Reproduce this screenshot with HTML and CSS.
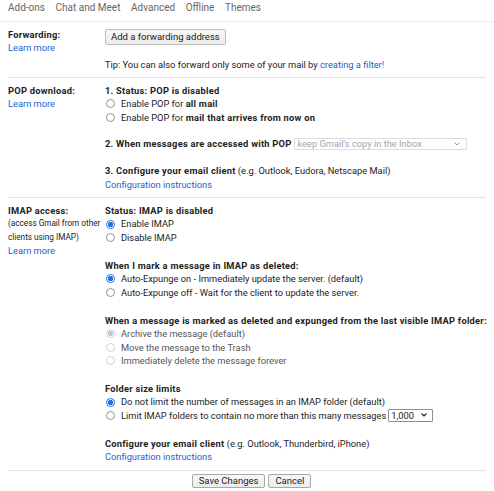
FILE: index.html
```html
<!DOCTYPE html>
<html>
<head>
<meta charset="utf-8">
<link rel="stylesheet" href="styles.css">
</head>
<body>
<div class="tabs">
  <span class="tab">Add-ons</span>
  <span class="tab">Chat and Meet</span>
  <span class="tab">Advanced</span>
  <span class="tab">Offline</span>
  <span class="tab">Themes</span>
</div>

<div class="section">
  <div class="label">
    <div class="line b">Forwarding:</div>
    <div class="line"><a class="link">Learn more</a></div>
  </div>
  <div class="content">
    <div><span class="btn fwd">Add a forwarding address</span></div>
    <div class="line tip">Tip: You can also forward only some of your mail by <a class="link">creating a filter!</a></div>
  </div>
</div>

<div class="section">
  <div class="label">
    <div class="line b">POP download:</div>
    <div class="line"><a class="link">Learn more</a></div>
  </div>
  <div class="content">
    <div class="line b">1. Status: POP is disabled</div>
    <div class="line opt"><span class="radio"></span>Enable POP for&nbsp;<b>all mail</b></div>
    <div class="line opt"><span class="radio"></span>Enable POP for&nbsp;<b>mail that arrives from now on</b></div>
    <div class="line"></div>
    <div class="line opt"><b>2. When messages are accessed with POP</b><span class="select dis">keep Gmail's copy in the Inbox<svg class="chev" width="6" height="4" viewBox="0 0 6 4"><path d="M0.5 0.5 L3 3 L5.5 0.5" fill="none" stroke="#9e9e9e" stroke-width="1"/></svg></span></div>
    <div class="line"></div>
    <div class="line"><b>3. Configure your email client</b> (e.g. Outlook, Eudora, Netscape Mail)</div>
    <div class="line"><a class="link">Configuration instructions</a></div>
  </div>
</div>

<div class="section">
  <div class="label">
    <div class="line b">IMAP access:</div>
    <div class="line small">(access Gmail from other</div>
    <div class="line small">clients using IMAP)</div>
    <div class="line"><a class="link">Learn more</a></div>
  </div>
  <div class="content">
    <div class="group">
      <div class="line b">Status: IMAP is disabled</div>
      <div class="line opt"><span class="radio on"></span>Enable IMAP</div>
      <div class="line opt"><span class="radio"></span>Disable IMAP</div>
    </div>
    <div class="group">
      <div class="line b">When I mark a message in IMAP as deleted:</div>
      <div class="line opt"><span class="radio on"></span>Auto-Expunge on - Immediately update the server. (default)</div>
      <div class="line opt"><span class="radio"></span>Auto-Expunge off - Wait for the client to update the server.</div>
    </div>
    <div class="group">
      <div class="line b">When a message is marked as deleted and expunged from the last visible IMAP folder:</div>
      <div class="line opt dim"><span class="radio dis on"></span>Archive the message (default)</div>
      <div class="line opt dim"><span class="radio dis"></span>Move the message to the Trash</div>
      <div class="line opt dim"><span class="radio dis"></span>Immediately delete the message forever</div>
    </div>
    <div class="group">
      <div class="line b">Folder size limits</div>
      <div class="line opt"><span class="radio on"></span>Do not limit the number of messages in an IMAP folder (default)</div>
      <div class="line opt"><span class="radio"></span>Limit IMAP folders to contain no more than this many messages<span class="select num">1,000<svg class="chev" width="6" height="4" viewBox="0 0 6 4"><path d="M0.5 0.5 L3 3 L5.5 0.5" fill="none" stroke="#222" stroke-width="1.2"/></svg></span></div>
    </div>
    <div class="group last">
      <div class="line"><b>Configure your email client</b> (e.g. Outlook, Thunderbird, iPhone)</div>
      <div class="line"><a class="link">Configuration instructions</a></div>
    </div>
  </div>
</div>

<div class="actions">
  <span class="btn act">Save Changes</span>
  <span class="btn act">Cancel</span>
</div>
</body>
</html>
```
FILE: styles.css
```css
html, body {
  margin: 0;
  padding: 0;
  background: #fff;
}
body {
  font-family: Roboto, "Liberation Sans", Arial, sans-serif;
  font-size: 9.3px;
  color: #222;
  width: 494px;
  height: 491px;
  overflow: hidden;
}
.tabs {
  display: flex;
  gap: 10.6px;
  padding: 1px 8px 0;
  height: 20px;
  border-bottom: 1px solid #ebebeb;
  color: #666;
  font-size: 10px;
  line-height: 14px;
}
.section {
  display: grid;
  grid-template-columns: 97px 1fr;
  margin: 0 8px;
  padding: 6px 0 6px;
  border-bottom: 1px solid #e3e3e3;
}
.line {
  height: 13.4px;
  line-height: 13.4px;
  white-space: nowrap;
}
.b, b {
  font-weight: bold;
  letter-spacing: 0.25px;
}
.small {
  font-size: 8.2px;
}
.link {
  color: #1a5fd1;
  text-decoration: none;
}
.btn {
  display: inline-flex;
  align-items: center;
  justify-content: center;
  box-sizing: border-box;
  border: 1px solid #bdbdbd;
  border-radius: 2px;
  background: linear-gradient(#f7f7f7, #ececec);
  color: #222;
  white-space: nowrap;
}
.fwd {
  height: 16px;
  padding: 0 5px;
  margin-top: 0.5px;
  font-size: 9.5px;
}
.tip {
  margin-top: 13px;
}
.opt {
  display: flex;
  align-items: center;
}
.dim {
  color: #555;
}
.radio {
  display: inline-block;
  box-sizing: border-box;
  width: 9px;
  height: 9px;
  margin: 0 6px 0 1px;
  border: 1px solid #909090;
  border-radius: 50%;
  background: #fff;
  flex: none;
}
.radio.on {
  border-color: #1a73e8;
  background: radial-gradient(circle, #1a73e8 0 2.4px, #fff 2.9px);
}
.radio.dis {
  border-color: #d2d2d2;
}
.radio.dis.on {
  border-color: #d2d2d2;
  background: radial-gradient(circle, #c4c4c4 0 2.4px, #fff 2.9px);
}
.select {
  display: inline-flex;
  align-items: center;
  justify-content: space-between;
  box-sizing: border-box;
  height: 12px;
  margin-left: 2px;
  padding: 0 6px 0 3px;
  border: 1px solid #dcdcdc;
  border-radius: 1px;
  font-weight: normal;
  letter-spacing: 0;
}
.select.dis {
  width: 173px;
  color: #a6a6a6;
}
.select.num {
  width: 45px;
  height: 13px;
  border-color: #8f8f8f;
  color: #222;
  padding: 0 5px 0 2px;
}
.chev {
  display: block;
  flex: none;
}
.group {
  margin-bottom: 14.7px;
}
.group.last {
  margin-bottom: 0;
}
.actions {
  display: flex;
  justify-content: center;
  gap: 3px;
  padding: 3px 0 0 9px;
}
.act {
  height: 14px;
  padding: 0 6px;
  border-color: #a8a8a8;
  font-size: 9.5px;
}
```
